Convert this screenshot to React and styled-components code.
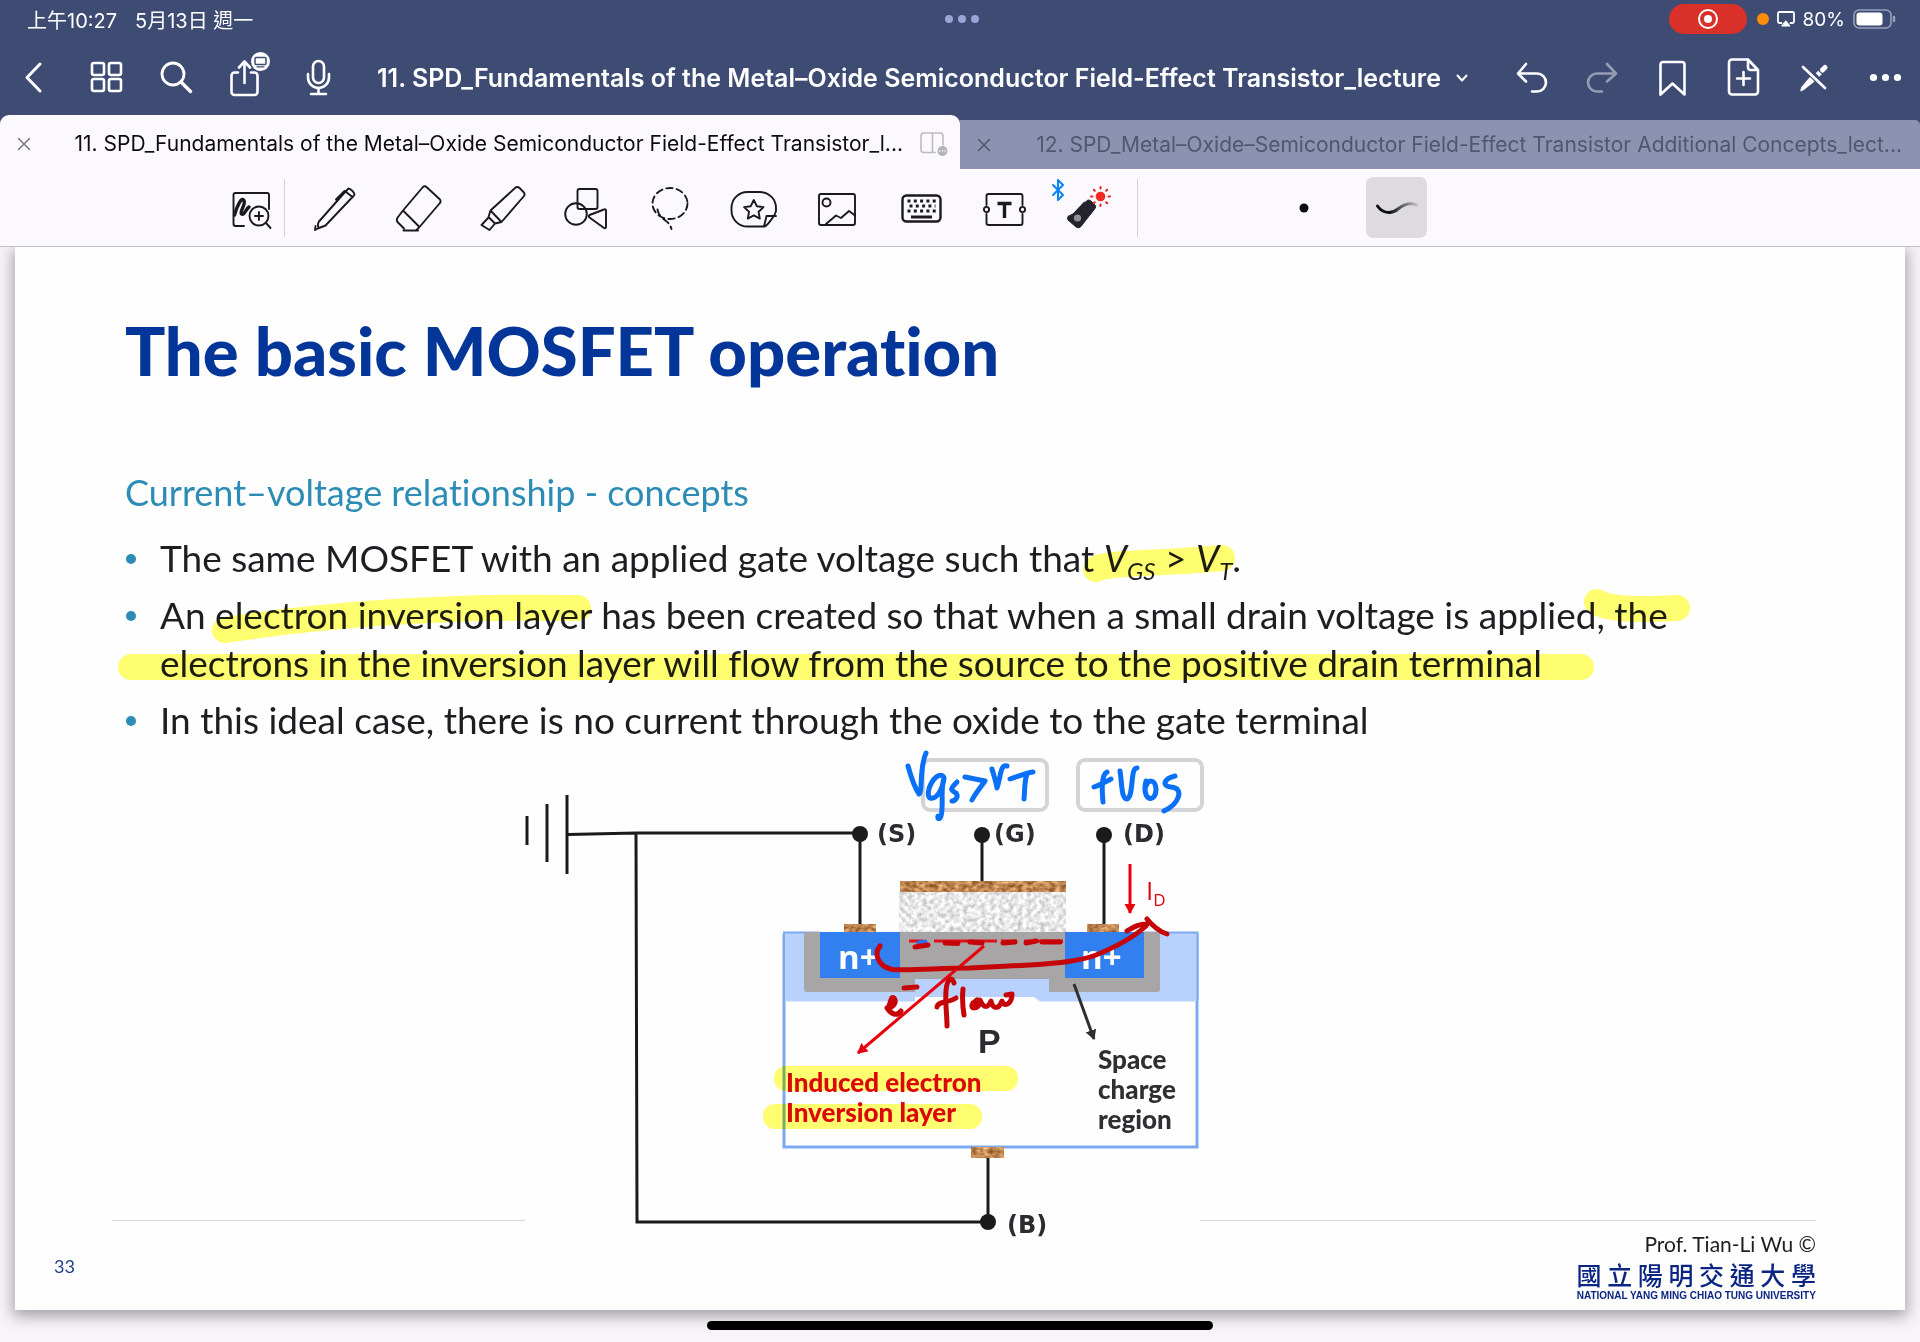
import React from "react";
import styled, { createGlobalStyle } from "styled-components";

const GlobalStyle = createGlobalStyle`
  * { box-sizing: border-box; }
  body { margin: 0; background: #f7f5f9; }
`;

const uiFont = `Inter, "Noto Sans CJK TC", sans-serif`;
const slideFont = `Lato, "Noto Sans CJK TC", sans-serif`;

const Shell = styled.div`
  min-height: 100vh;
  display: flex;
  flex-direction: column;
  font-family: ${uiFont};
  background: #f7f5f9;
`;

const Header = styled.header`
  background: #3e4c74;
  color: #fff;
`;

const StatusBar = styled.div`
  display: grid;
  grid-template-columns: 1fr auto 1fr;
  align-items: center;
  height: 38px;
  padding: 0 24px 0 27px;
  font-size: 20px;
  font-weight: 400;
`;

const StatusSide = styled.div`
  display: flex;
  align-items: center;
  justify-content: ${(p) => (p.$end ? "flex-end" : "flex-start")};
  gap: ${(p) => (p.$end ? "8px" : "18px")};
`;

const WindowDots = styled.button`
  display: flex;
  gap: 5px;
  padding: 4px;
  border: 0;
  background: none;
  & > i { width: 8px; height: 8px; border-radius: 50%; background: #9ba4d8; }
`;

const RecordPill = styled.button`
  display: grid;
  place-items: center;
  width: 78px;
  height: 30px;
  margin-right: 2px;
  padding: 0;
  border: 0;
  border-radius: 15px;
  background: #d93029;
`;

const OrangeDot = styled.span`
  width: 12px;
  height: 12px;
  border-radius: 50%;
  background: #ff8d0a;
`;

const BatteryLevel = styled.span`
  font-size: 19px;
`;

const NavBar = styled.nav`
  display: flex;
  align-items: center;
  height: 77px;
`;

const NavButton = styled.button`
  display: grid;
  place-items: center;
  flex: none;
  width: 71px;
  height: 60px;
  padding: 0;
  border: 0;
  background: none;
  color: #fff;
  opacity: ${(p) => (p.disabled ? 0.45 : 1)};
`;

const TitleButton = styled.button`
  flex: 1;
  min-width: 0;
  display: flex;
  align-items: center;
  justify-content: center;
  gap: 15px;
  padding: 2px 4px 0 0;
  border: 0;
  background: none;
  color: #fff;
  font: 600 25px/32px ${uiFont};
  white-space: nowrap;
`;

const Icon = styled.svg`
  display: block;
  flex: none;
  overflow: visible;
  fill: none;
  stroke: currentColor;
  stroke-width: ${(p) => p.$w || 2};
  stroke-linecap: round;
  stroke-linejoin: round;
`;

const Tabs = styled.div`
  display: grid;
  grid-template-columns: 1fr 1fr;
  align-items: end;
`;

const Tab = styled.div`
  display: flex;
  align-items: center;
  min-width: 0;
  height: ${(p) => (p.$active ? 54 : 49)}px;
  padding: ${(p) => (p.$active ? "3px 12px 0 17px" : "1px 18px 0 17px")};
  gap: 17px;
  border-radius: ${(p) => (p.$active ? "9px 9px 0 0" : "0 5px 0 0")};
  background: ${(p) => (p.$active ? "#fbf9fd" : "#8b93b1")};
  color: ${(p) => (p.$active ? "#0c0c0e" : "#50576f")};
`;

const TabClose = styled.button`
  display: grid;
  place-items: center;
  flex: none;
  width: 14px;
  height: 14px;
  padding: 0;
  border: 0;
  background: none;
  color: ${(p) => (p.$active ? "#7b7a80" : "#50576f")};
`;

const TabLabel = styled.button`
  flex: 1;
  min-width: 0;
  padding: 0;
  border: 0;
  background: none;
  color: inherit;
  font: 400 21px/28px ${uiFont};
  text-align: right;
  white-space: nowrap;
`;

const Toolbar = styled.div`
  display: flex;
  align-items: center;
  height: 78px;
  padding-left: 220px;
  border-bottom: 1px solid #c3c1c7;
  background: #fbf9fd;
  color: #1a1a1d;
`;

const ToolButton = styled.button`
  display: grid;
  place-items: center;
  flex: none;
  width: ${(p) => p.$width || 84}px;
  height: 61px;
  padding: 0;
  border: 0;
  border-radius: 7px;
  background: ${(p) => (p.$selected ? "#dddbdf" : "none")};
  color: inherit;
`;

const Divider = styled.span`
  width: 1px;
  height: 58px;
  margin: 0 7px 0 ${(p) => p.$before || 0}px;
  background: #d3d1d7;
`;

const StrokeTools = styled.div`
  display: flex;
  gap: 32px;
  margin-left: 128px;
`;

const Workspace = styled.main`
  flex: 1;
  display: flex;
  flex-direction: column;
  align-items: center;
  padding: 0 15px 12px;
  overflow: hidden;
`;

const Page = styled.article`
  width: 100%;
  padding-bottom: 8px;
  background: #fefefe;
  box-shadow: 0 4px 14px 2px rgba(40, 36, 50, 0.42);
  font-family: ${slideFont};
  font-variant-ligatures: none;
`;

const SlideBody = styled.section`
  padding: 67px 110px 0;
`;

const SlideTitle = styled.h1`
  margin: 0;
  color: #04369a;
  font-size: 67px;
  line-height: 72px;
  font-weight: 900;
`;

const SlideSubtitle = styled.h2`
  margin: 82px 0 0;
  color: #2c8cb5;
  font-size: 36px;
  line-height: 48px;
  font-weight: 400;
`;

const Notes = styled.div`
  position: relative;
  margin-top: 18px;
`;

const Bullets = styled.ul`
  margin: 0;
  padding: 0 0 6px;
  list-style: none;
  color: #1d1d22;
  font-size: 37px;
  line-height: 48px;
  white-space: nowrap;
  & > li { position: relative; padding-left: 35px; }
  & > li + li { margin-top: 9px; }
  & > li::before {
    content: "";
    position: absolute;
    left: 1px;
    top: 20px;
    width: 10px;
    height: 10px;
    border-radius: 50%;
    background: #2c8cb5;
  }
  & sub { font-size: 24px; line-height: 0; vertical-align: -8px; }
`;

const Marker = styled.svg`
  position: absolute;
  left: -10px;
  top: 0;
  overflow: visible;
  pointer-events: none;
  mix-blend-mode: multiply;
  fill: none;
  stroke: #ffff70;
  stroke-width: 26;
  stroke-linecap: round;
  stroke-linejoin: round;
`;

const FigureRow = styled.div`
  display: flex;
  align-items: flex-end;
  padding: 0 89px 0 97px;
`;

const Rule = styled.span`
  flex: ${(p) => p.$grow};
  height: 1px;
  margin-bottom: 9px;
  background: #dad6de;
`;

const Figure = styled.svg`
  display: block;
  flex: none;
  width: 675px;
  height: 480px;
  overflow: visible;
  .wire { fill: none; stroke: #1b1b1d; stroke-width: 3; }
  .node { fill: #1b1b1d; }
  .terminal { font: 700 24px "DejaVu Sans", sans-serif; fill: #2c2c30; }
  .doping { font: 700 33px "Open Sans", sans-serif; fill: #fff; }
  .caption { font: 900 26px Lato, sans-serif; fill: #2f2f33; }
  .red { fill: #dc0712; }
  .ink { fill: none; stroke-linecap: round; stroke-linejoin: round; stroke-width: 5; }
  .marker { mix-blend-mode: multiply; fill: #ffff70; }
`;

const Footer = styled.footer`
  display: flex;
  justify-content: space-between;
  align-items: center;
  padding: 0 89px 0 39px;
`;

const PageNumber = styled.span`
  color: #1d3f8c;
  font-size: 18px;
`;

const Credit = styled.div`
  display: flex;
  flex-direction: column;
  align-items: flex-end;
  color: #1d1d22;
  font-size: 21px;
  line-height: 28px;
`;

const University = styled.div`
  color: #0a2583;
  text-align: center;
  font: 500 25px/32px "Noto Sans CJK TC", sans-serif;
  & > small {
    display: block;
    font: 700 10px/12px "Liberation Sans", sans-serif;
  }
`;

const HomeIndicator = styled.div`
  position: relative;
  width: 506px;
  height: 9px;
  margin-top: 11px;
  border-radius: 5px;
  background: #000;
`;

const NavIcon = ({ children, w = 2.6 }) => (
  <Icon width="40" height="40" viewBox="0 0 40 40" $w={w} aria-hidden="true">{children}</Icon>
);
const ToolIcon = ({ children, w = 1.9 }) => (
  <Icon width="48" height="48" viewBox="0 -1 48 48" $w={w} aria-hidden="true">{children}</Icon>
);

const Cross = () => (
  <Icon width="12" height="12" viewBox="0 0 12 12" $w={1.6} aria-hidden="true">
    <path d="M0.5 0.5 11.5 11.5M11.5 0.5 0.5 11.5" />
  </Icon>
);

const leftNav = [
  ["Back", <NavIcon w={3}><path d="M24 7 11 20.500 24 34" /></NavIcon>],
  ["Thumbnails", <NavIcon>
    {[[5, 6], [22, 6], [5, 22], [22, 22]].map(([x, y]) => (
      <rect key={`${x}-${y}`} x={x} y={y} width="12" height="12" rx="2" />
    ))}
  </NavIcon>],
  ["Search", <NavIcon w={2.8}><circle cx="15" cy="17" r="11" /><path d="m23 25 9.500 9.500" strokeWidth="3.400" /></NavIcon>],
  ["Share", <NavIcon>
    <path d="M9 15.500H5.500a3 3 0 0 0-3 3V35a3 3 0 0 0 3 3h20a3 3 0 0 0 3-3V18.500a3 3 0 0 0-3-3H22M15.500 26V5M10 10.500 15.500 4.500l5.500 6" />
    <circle cx="31.500" cy="4.500" r="9.500" fill="#fff" stroke="none" />
    <rect x="26" y="0.500" width="11" height="7" rx="1" stroke="#3e4c74" strokeWidth="1.500" />
    <path d="M28 9.800h7" stroke="#3e4c74" strokeWidth="1.200" />
  </NavIcon>],
  ["Record audio", <NavIcon>
    <rect x="13" y="4" width="11" height="22" rx="5.500" />
    <path d="M8 17v3.500a10.500 10.500 0 0 0 21 0V17M18.500 31v6M11 37h15" />
  </NavIcon>],
];

const rightNav = [
  ["Undo", <NavIcon><path d="M16 7 8 16.500l8 8M8.500 16.500H27a9 9 0 0 1 0 18h-5" /></NavIcon>],
  ["Redo", <NavIcon><path d="m26 7 9 9.500-9 8M34.500 16.500H16a9 9 0 0 0 0 18h5" /></NavIcon>, true],
  ["Bookmark", <NavIcon><path d="M8.500 7.500a2.500 2.500 0 0 1 2.500-2.500h19a2.500 2.500 0 0 1 2.500 2.500V37.500l-12-11-12 11Z" /></NavIcon>],
  ["Add page", <NavIcon>
    <path d="M25 2.500H9a3 3 0 0 0-3 3v29a3 3 0 0 0 3 3h23a3 3 0 0 0 3-3V13L25 2.500v8a2.500 2.500 0 0 0 2.500 2.500H35M20.500 15v13M14 21.500h13" />
  </NavIcon>],
  ["Read only mode", <NavIcon>
    <path d="M9 10 31 31" />
    <path d="M28.500 13 31 10.500" strokeWidth="5" />
    <path d="m23.500 18 2.500-2.500" strokeWidth="5" strokeLinecap="butt" />
    <path d="M16 21 8 30.500 7 33.500l3-1.500L19.500 24.500Z" fill="currentColor" strokeWidth="1.500" />
  </NavIcon>],
  ["More", <NavIcon>
    {[8.5, 20.5, 32.5].map((x) => <circle key={x} cx={x} cy="20.500" r="3.600" fill="currentColor" stroke="none" />)}
  </NavIcon>],
];

const tools = [
  ["Pen", <ToolIcon>
    <path d="M9 36.500 35.500 6.500 42.500 12 15.500 40.500 9 43c-1.500-.5-1.500-4.500 0-6.500ZM35.500 6.500 38.500 3.500c2 0 6 4 6 6l-2 3M26 14.500 34.500 6l2 .5M9 43l-4 2 .5-4" />
  </ToolIcon>],
  ["Eraser", <ToolIcon>
    <path d="M9 25.500 28.500 2.500c1.500-1.500 3-1.500 4.500 0L45.500 14c1.500 1.500 1.500 3 0 4.500L25.500 42ZM9 25.500l-5 6.500c-1.500 2-1.500 4 0 5.500l6 6M25.500 42l-3 3M9.500 45.500h14.500" />
  </ToolIcon>],
  ["Highlighter", <ToolIcon>
    <path d="M12.500 25.500 37 3c1.500-1.500 3-1.500 4.500 0l4 4c1.500 1.500 1.500 2.500.5 4L23.500 37ZM12.500 25.500 10.500 32l6.500 6.500 6.500-1.500M10.500 32.500 3.500 40l8 5 5.500-6.500" />
  </ToolIcon>],
  ["Shapes", <ToolIcon>
    <rect x="15.500" y="4" width="20" height="20" rx="2" />
    <circle cx="14" cy="29" r="10.800" />
    <path d="M27.500 32.500c-1-1-1-1.500 0-2.500L42 24.500c1-.5 2 0 2 1V42c0 1-1 1.500-2 1Z" />
  </ToolIcon>],
  ["Lasso", <ToolIcon>
    <ellipse cx="24" cy="18.500" rx="17.500" ry="15.500" strokeDasharray="6.500 4" />
    <path d="M11.500 24.500c2 11 11 9 14 19.500" strokeDasharray="7 4" />
  </ToolIcon>],
  ["Sticker", <ToolIcon>
    <path d="M46 25.500V23A16 16 0 0 0 30 7H17.500A16 16 0 0 0 1.500 23v2.500a16 16 0 0 0 16 16H34c3 0 12-12.500 12-16ZM34 41.500 36.500 31h9.500" />
    <path d="m23.800 15 3 6.200 6.700.9-4.900 4.700 1.200 6.800-6-3.200-6 3.200 1.200-6.800-4.900-4.700 6.700-.9Z" />
  </ToolIcon>],
  ["Image", <ToolIcon>
    <rect x="5" y="9" width="36" height="31" rx="2" />
    <circle cx="12.500" cy="17.500" r="4" />
    <path d="m12 39 10-8.500 5 2.500 8-7 6 4.500" />
  </ToolIcon>],
  ["Keyboard", <ToolIcon>
    <rect x="4.500" y="10.500" width="38" height="26" rx="4" strokeWidth="2.400" />
    <path d="M9.500 16h28.500M11.500 21h26M9.500 26h28.500" strokeWidth="3" strokeDasharray="3 3.300" strokeLinecap="butt" />
    <path d="M13 32h21" strokeWidth="3" strokeLinecap="butt" />
  </ToolIcon>],
  ["Text", <ToolIcon>
    <path d="M4.500 20V11a2 2 0 0 1 2-2h32a2 2 0 0 1 2 2v9M40.500 29v9a2 2 0 0 1-2 2h-32a2 2 0 0 1-2-2v-9" />
    <circle cx="4.500" cy="24.500" r="2.600" /><circle cx="40.500" cy="24.500" r="2.600" />
    <path d="M15.500 18.500h14M22.500 18v15" strokeWidth="3.400" strokeLinecap="butt" />
  </ToolIcon>],
  ["Laser pointer", <ToolIcon>
    <path d="m-13 0 10 10-5 5V-5L-3 0l-10 10" stroke="#0a84f5" strokeWidth="2" />
    <path d="M7 38 23 21" stroke="#23242d" strokeWidth="13" strokeLinecap="butt" />
    <path d="m9 28 12-12.500q2-1 3.500 0l4.500 4.500q1.500 2 0 3.500L14.500 42q-2 1.500-4.500 0l-8-7q-1-2 0-3.500Z" fill="#23242d" stroke="#23242d" strokeWidth="1" />
    <circle cx="11.500" cy="33" r="3.600" fill="#8f9098" stroke="none" />
    <circle cx="34.500" cy="11.500" r="4.800" fill="#f62a22" stroke="none" />
    <path d="M34.500 3.500V2M34.500 19.500v1.500M26.500 11.500h-1.500M42.500 11.500h1.500M28.800 5.800l-1-1M40.200 5.800l1-1M28.800 17.200l-1 1M40.200 17.200l1 1" stroke="#e0242a" strokeWidth="2" />
  </ToolIcon>],
];

function Diagram() {
  return (
    <Figure viewBox="525 750 675 480" role="img" aria-label="MOSFET cross section">
      <defs>
        <filter id="copper" x="0" y="0" width="100%" height="100%" colorInterpolationFilters="sRGB">
          <feTurbulence type="fractalNoise" baseFrequency="0.18 0.26" numOctaves="2" seed="4" />
          <feColorMatrix values="0.7 0 0 0 0.4  0.7 0 0 0 0.18  0.6 0 0 0 0.02  0 0 0 0 1" />
        </filter>
        <filter id="oxide" x="0" y="0" width="100%" height="100%" colorInterpolationFilters="sRGB">
          <feTurbulence type="fractalNoise" baseFrequency="0.22" numOctaves="2" seed="9" />
          <feColorMatrix values="0.5 0 0 0 0.66  0.5 0 0 0 0.66  0.5 0 0 0 0.66  0 0 0 0 1" />
        </filter>
        <marker id="redHead" markerUnits="userSpaceOnUse" markerWidth="12" markerHeight="12" refX="9" refY="5.500" orient="auto">
          <path d="M0 0 10 5.500 0 11Z" fill="#e8000c" />
        </marker>
        <marker id="darkHead" markerUnits="userSpaceOnUse" markerWidth="12" markerHeight="12" refX="9" refY="5.500" orient="auto">
          <path d="M0 0 10 5.500 0 11Z" fill="#2f2f33" />
        </marker>
      </defs>

      <path d="M784 934V1147H1197V934" fill="none" stroke="#7baaf0" strokeWidth="3" />
      <path d="M788 932H1193a5 5 0 0 1 5 5V997a4 4 0 0 1-4 4.500H1040L1034 997H915V1001.500H788a5 5 0 0 1-5-5V937a5 5 0 0 1 5-5Z" fill="#b9d1fd" />
      <path d="M784 1000V932.500H820M1144 932.500H1197.500V1000" fill="none" stroke="#7baaf0" strokeWidth="2" />
      <path d="M804 932H1160V989a3 3 0 0 1-3 3H1049V979H915V992H807a3 3 0 0 1-3-3Z" fill="#a7a5a5" />
      <rect x="820" y="932" width="80" height="46" fill="#327ff0" />
      <rect x="1065" y="932" width="79" height="46" fill="#327ff0" />
      <rect x="899" y="892" width="167" height="40" filter="url(#oxide)" />
      <rect x="900" y="881" width="166" height="11" filter="url(#copper)" />
      <rect x="844" y="924" width="32" height="8" filter="url(#copper)" />
      <rect x="1087" y="924" width="32" height="8" filter="url(#copper)" />
      <rect x="971" y="1147" width="33" height="11" filter="url(#copper)" />

      <path className="wire" d="M527 816v29M547 804v58M567 795v79M568 834.500 636 833H860V924M982 834V881M1104 834V924M636 833 637 1222H988V1158" />
      {[[860, 834], [982, 835], [1104, 835], [988, 1222]].map(([x, y]) => (
        <circle key={`${x}-${y}`} className="node" cx={x} cy={y} r="8" />
      ))}

      <text className="terminal" x="877" y="842">(S)</text>
      <text className="terminal" x="994" y="842">(G)</text>
      <text className="terminal" x="1123" y="842">(D)</text>
      <text className="terminal" x="1007" y="1233">(B)</text>
      <text className="doping" x="838" y="969">n+</text>
      <text className="doping" x="1081" y="969">n+</text>
      <text x="978" y="1053" fontFamily="Liberation Sans, sans-serif" fontWeight="700" fontSize="34" fill="#2c2c30">P</text>
      <text className="caption" x="1098" y="1069">
        Space
        <tspan x="1098" dy="30">charge</tspan>
        <tspan x="1098" dy="30">region</tspan>
      </text>
      <text className="caption red" x="786" y="1092">
        Induced electron
        <tspan x="786" dy="30">Inversion layer</tspan>
      </text>
      <text x="1146" y="900" fontFamily="Open Sans, sans-serif" fontSize="26" fill="#dc0712">
        I<tspan fontSize="17" dy="6">D</tspan>
      </text>
      <rect className="marker" x="774" y="1066" width="244" height="25" rx="12" />
      <rect className="marker" x="763" y="1104" width="219" height="25" rx="12" />

      <path d="M1130 864V913" stroke="#e8000c" strokeWidth="3" markerEnd="url(#redHead)" />
      <path d="M984 946 858 1053" stroke="#e8000c" strokeWidth="3" markerEnd="url(#redHead)" />
      <path d="M1074 984 1094 1039" stroke="#2f2f33" strokeWidth="3" markerEnd="url(#darkHead)" />

      <g fill="none" stroke="#d4d3d7" strokeWidth="4">
        <rect x="923" y="760" width="124" height="50" rx="7" />
        <rect x="1078" y="760" width="124" height="50" rx="7" />
      </g>

      <path d="M909 941H923M934 941H997M1001 941H1017M1024 941H1063" stroke="#e01018" strokeWidth="3" />
      <path className="ink" stroke="#2f6fe8" d="M919 943 925 942" />
      <g className="ink" stroke="#c60509">
        <path d="M915 947 928 945M945 943 958 943.500M970 942l12 1M1003 943 1015 942M1026 943 1036 941M1042 942 1060 942" />
        <path d="M880 946C874 953 877 966 892 969.500C910 971 940 968 970 968L1030 965C1060 963 1080 961 1096 955C1118 946 1135 936 1146 926M1127 931C1134 927 1138 924 1147 924M1147 919C1151 924 1158 931 1167 934" />
        <path d="M888 1008C894 1007 897 1002 894 998C890 995 891 1006 887 1008C891 1014 897 1017 901 1011M904 988 917 987" />
        <path d="M954 983C952 976 947 978 946 991C945 1004 947 1014 947 1026M937 1007C938 1001 948 1003 956 998M963 989C962 999 963 1009 964 1015M973 1003C969 1009 977 1010 980 1003C978 997 974 1001 975 1004M980 1000C984 1009 988 1008 991 1001C993 1010 999 1009 1002 1001C1004 1008 1012 1004 1012 994L1006 995" />
      </g>
      <g className="ink" stroke="#0b70f8">
        <path d="M908 766C911 777 915 788 919 794C923 792 919 768 926 753" />
        <path d="M943 776C935 771 924 793 930 798C937 800 943 788 944 778C940 790 944 806 941 816C940 820 937 819 938 816" />
        <path d="M957 782C949 790 951 790 956 793C959 797 955 801 952 801" />
        <path d="M965 777 985 781C980 788 975 794 972 800" />
        <path d="M992 769C994 776 996 782 997 788C1001 777 1000 764 1007 766" />
        <path d="M1010 779C1016 777 1026 773 1033 772M1027 774C1024 782 1025 790 1024 799" />
        <path d="M1107 772C1101 775 1102 791 1103 802M1094 787C1100 785 1105 782 1111 779" />
        <path d="M1120 771C1122 782 1121 799 1127 799C1134 797 1130 767 1137 768" />
        <path d="M1146 781C1141 801 1156 804 1156 789C1155 778 1148 780 1146 786" />
        <path d="M1175 776C1163 779 1162 786 1171 787C1185 788 1179 804 1164 811" />
      </g>
    </Figure>
  );
}

export default function App() {
  return (
    <Shell>
      <GlobalStyle />
      <Header>
        <StatusBar>
          <StatusSide><span>上午10:27</span><span>5月13日 週一</span></StatusSide>
          <WindowDots aria-label="Window options"><i /><i /><i /></WindowDots>
          <StatusSide $end>
            <RecordPill aria-label="Stop recording">
              <Icon width="20" height="20" viewBox="0 0 20 20" $w={2}>
                <circle cx="10" cy="10" r="9" stroke="#fff" /><circle cx="10" cy="10" r="4" fill="#fff" stroke="none" />
              </Icon>
            </RecordPill>
            <OrangeDot />
            <Icon width="18" height="16" viewBox="0 0 18 16" $w={1.8}>
              <path d="M4.500 12H2.500A1.500 1.500 0 0 1 1 10.500V2.500A1.500 1.500 0 0 1 2.500 1h13A1.500 1.500 0 0 1 17 2.500v8a1.500 1.500 0 0 1-1.500 1.500h-2" />
              <path d="M9 10 13 15H5Z" fill="currentColor" strokeWidth="1" />
            </Icon>
            <BatteryLevel>80%</BatteryLevel>
            <Icon width="43" height="20" viewBox="0 0 43 20" $w={1.6}>
              <rect x="1" y="1" width="37" height="18" rx="5" stroke="#98a0bd" />
              <rect x="3.500" y="3.500" width="26" height="13" rx="3" fill="#fff" stroke="none" />
              <path d="M41 8v4" stroke="#98a0bd" strokeWidth="2.400" />
            </Icon>
          </StatusSide>
        </StatusBar>
        <NavBar>
          {leftNav.map(([name, icon]) => <NavButton key={name} aria-label={name}>{icon}</NavButton>)}
          <TitleButton>
            11. SPD_Fundamentals of the Metal–Oxide Semiconductor Field-Effect Transistor_lecture
            <Icon width="12" height="8" viewBox="0 0 12 8" $w={2}><path d="m1.500 1.500 4.500 5 4.500-5" /></Icon>
          </TitleButton>
          {rightNav.map(([name, icon, off]) => <NavButton key={name} aria-label={name} disabled={off}>{icon}</NavButton>)}
        </NavBar>
        <Tabs>
          <Tab $active>
            <TabClose $active aria-label="Close tab 11"><Cross /></TabClose>
            <TabLabel>11. SPD_Fundamentals of the Metal–Oxide Semiconductor Field-Effect Transistor_l...</TabLabel>
            <Icon width="28" height="24" viewBox="0 0 28 24" $w={1.6}>
              <g stroke="#bdbbc2">
                <path d="M15 20.500H4A3 3 0 0 1 1 17.500V4a3 3 0 0 1 3-3h16a3 3 0 0 1 3 3v9M12.500 1v19.500" />
                <circle cx="22.500" cy="19" r="5" fill="#b5b3ba" stroke="none" />
                <path d="M19.800 19h.01M22.500 19h.01M25.200 19h.01" stroke="#fff" />
              </g>
            </Icon>
          </Tab>
          <Tab>
            <TabClose aria-label="Close tab 12"><Cross /></TabClose>
            <TabLabel>12. SPD_Metal–Oxide–Semiconductor Field-Effect Transistor Additional Concepts_lect...</TabLabel>
          </Tab>
        </Tabs>
      </Header>

      <Toolbar role="toolbar" aria-label="Drawing tools">
        <ToolButton $width={64} aria-label="Zoom window">
          <ToolIcon>
            <path d="M16 41H7.500a2 2 0 0 1-2-2V10a2 2 0 0 1 2-2H39a2 2 0 0 1 2 2v14" />
            <path d="M6.500 30C9 21 14 11 16 15.500S11 27 13.500 29 18 24 21 22" strokeWidth="3.400" />
            <circle cx="31" cy="31" r="9.500" /><path d="M27 31h8M31 27v8M38 38l4.500 5" />
          </ToolIcon>
        </ToolButton>
        <Divider />
        {tools.map(([name, icon]) => <ToolButton key={name} aria-label={name}>{icon}</ToolButton>)}
        <Divider $before={5} />
        <StrokeTools>
          <ToolButton $width={61} aria-label="Dot">
            <Icon width="10" height="10" viewBox="0 0 10 10"><circle cx="5" cy="5" r="4.500" fill="#0c0c0e" stroke="none" /></Icon>
          </ToolButton>
          <ToolButton $width={61} $selected aria-label="Pressure stroke">
            <Icon width="42" height="16" viewBox="0 0 42 16" $w={3}>
              <defs>
                <linearGradient id="fade"><stop offset="0.3" stopColor="#0c0c0e" /><stop offset="1" stopColor="#c4c2c6" /></linearGradient>
              </defs>
              <path d="M1.500 6C7 14 16 14 22 9S34 2 41 5" stroke="url(#fade)" />
            </Icon>
          </ToolButton>
        </StrokeTools>
      </Toolbar>

      <Workspace>
        <Page>
          <SlideBody>
            <SlideTitle>The basic MOSFET operation</SlideTitle>
            <SlideSubtitle>Current–voltage relationship - concepts</SlideSubtitle>
            <Notes>
              <Bullets>
                <li>The same MOSFET with an applied gate voltage such that <em>V<sub>GS</sub></em> &gt; <em>V<sub>T</sub></em>.</li>
                <li>
                  An electron inversion layer has been created so that when a small drain voltage is applied, the<br />
                  electrons in the inversion layer will flow from the source to the positive drain terminal
                </li>
                <li>In this ideal case, there is no current through the oxide to the gate terminal</li>
              </Bullets>
              <Marker width="1600" height="200" viewBox="115 534 1600 200" aria-hidden="true">
                <path d="M1096 569C1108 562 1160 564 1222 558" />
                <path d="M225 630C330 614 450 606 578 608" />
                <path d="M1597 602C1610 610 1640 610 1677 608" />
                <path d="M131 667H1581" />
              </Marker>
            </Notes>
          </SlideBody>
          <FigureRow>
            <Rule $grow={413} />
            <Diagram />
            <Rule $grow={616} />
          </FigureRow>
          <Footer>
            <PageNumber>33</PageNumber>
            <Credit>
              <span>Prof. Tian-Li Wu ©</span>
              <University>
                國 立 陽 明 交 通 大 學
                <small>NATIONAL YANG MING CHIAO TUNG UNIVERSITY</small>
              </University>
            </Credit>
          </Footer>
        </Page>
        <HomeIndicator />
      </Workspace>
    </Shell>
  );
}
